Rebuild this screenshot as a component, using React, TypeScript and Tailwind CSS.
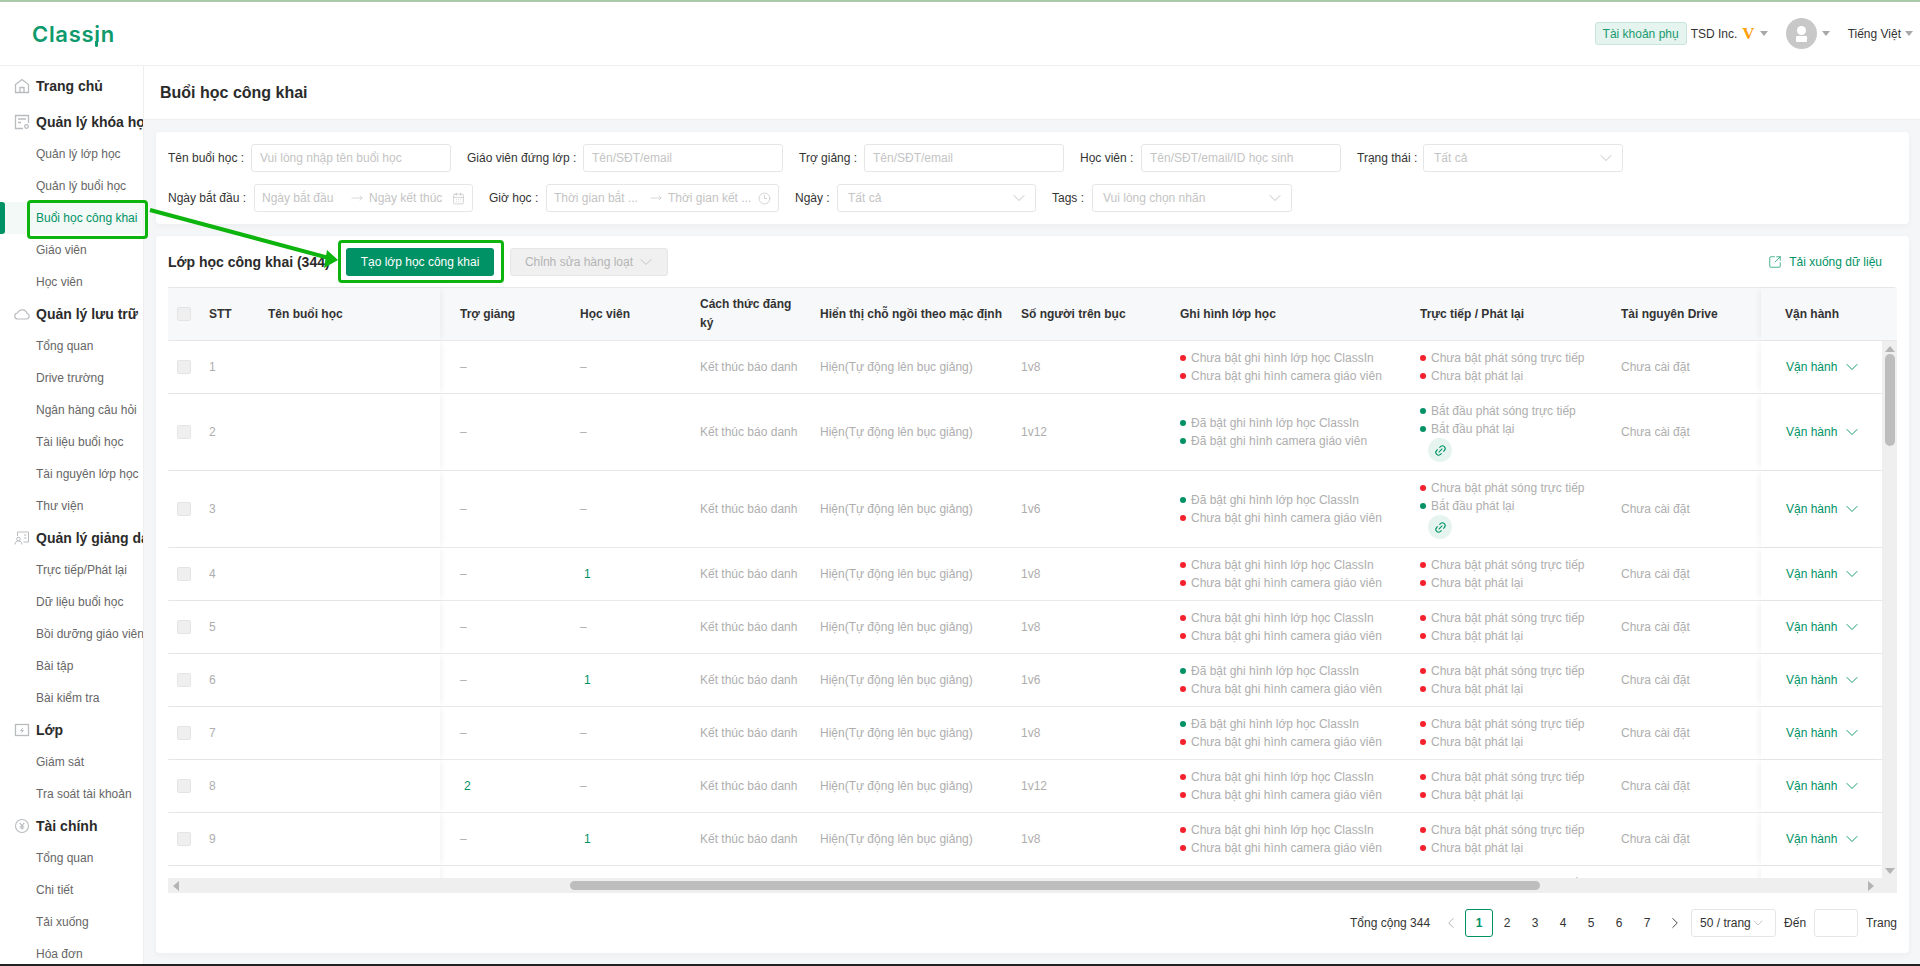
import React from 'react';
import { ChevronDown, ChevronLeft, ChevronRight, Link2, CalendarDays, Clock3, MoveRight, SquareArrowOutUpRight } from 'lucide-react';

const GREEN = 'text-[#009265]';

const IconHome = () => (
  <svg width="16" height="16" viewBox="0 0 16 16" fill="none" stroke="#b9bcbf" strokeWidth="1.3">
    <path d="M1.5 6.5 8 1.5l6.5 5V14.5h-13z" />
    <path d="M6 14.5V9.5h4v5" />
  </svg>
);
const IconCourse = () => (
  <svg width="16" height="16" viewBox="0 0 16 16" fill="none" stroke="#b9bcbf" strokeWidth="1.3">
    <path d="M9 14.5H1.5v-13h13V9" />
    <path d="M4 5h8M4 8.5h3" />
    <circle cx="12.5" cy="12.5" r="1.8" />
  </svg>
);
const IconCloud = () => (
  <svg width="16" height="16" viewBox="0 0 16 16" fill="none" stroke="#b9bcbf" strokeWidth="1.2">
    <path d="M4 13h8.5a2.8 2.8 0 0 0 .6-5.5A5 5 0 0 0 3.6 7 3 3 0 0 0 4 13z" />
  </svg>
);
const IconTeach = () => (
  <svg width="16" height="16" viewBox="0 0 16 16" fill="none" stroke="#b9bcbf" strokeWidth="1">
    <path d="M3.5 6V2h11v10h-5" />
    <circle cx="4.5" cy="9" r="1.8" />
    <path d="M1 14.5c0-2.5 1.5-3.5 3.5-3.5s3.5 1 3.5 3.5M10 5h2.5M10 8h2.5" />
  </svg>
);
const IconClass = () => (
  <svg width="16" height="16" viewBox="0 0 16 16" fill="none" stroke="#b9bcbf" strokeWidth="1.3">
    <rect x="1.5" y="2.5" width="13" height="11" />
    <path d="M9 6 6.5 8.5h3L7 10.5" strokeWidth="1" />
  </svg>
);
const IconMoney = () => (
  <svg width="16" height="16" viewBox="0 0 16 16" fill="none" stroke="#b9bcbf" strokeWidth="1.1">
    <circle cx="8" cy="8" r="6.5" />
    <path d="M5.7 4.8 8 7.5l2.3-2.7M8 7.5v4M5.8 8.2h4.4M5.8 10h4.4" />
  </svg>
);

const menu = [
  { title: 'Trang chủ', icon: <IconHome />, items: [] as string[] },
  { title: 'Quản lý khóa học', icon: <IconCourse />, items: ['Quản lý lớp học', 'Quản lý buổi học', 'Buổi học công khai', 'Giáo viên', 'Học viên'] },
  { title: 'Quản lý lưu trữ', icon: <IconCloud />, items: ['Tổng quan', 'Drive trường', 'Ngân hàng câu hỏi', 'Tài liệu buổi học', 'Tài nguyên lớp học', 'Thư viện'] },
  { title: 'Quản lý giảng dạy', icon: <IconTeach />, items: ['Trực tiếp/Phát lại', 'Dữ liệu buổi học', 'Bồi dưỡng giáo viên', 'Bài tập', 'Bài kiểm tra'] },
  { title: 'Lớp', icon: <IconClass />, items: ['Giám sát', 'Tra soát tài khoản'] },
  { title: 'Tài chính', icon: <IconMoney />, items: ['Tổng quan', 'Chi tiết', 'Tải xuống', 'Hóa đơn'] },
];

const Caret = () => <span className="inline-block w-0 h-0 border-x-[4px] border-x-transparent border-t-[5px] border-t-[#a8a8a8]" />;

const Sidebar = () => (
  <aside className="w-[144px] shrink-0 border-r border-[#eeeeee] bg-white pt-1 overflow-hidden">
    {menu.map((m, i) => (
      <div key={i}>
        <div className={`h-8 flex items-center pl-[14px] gap-[6px] whitespace-nowrap ${i === 0 ? 'mb-1' : ''}`}>
          <span className="w-4 h-4 shrink-0">{m.icon}</span>
          <span className="text-[14px] font-bold text-[#2b2b2b]">{m.title}</span>
        </div>
        {m.items.map(t => {
          const active = t === 'Buổi học công khai';
          return (
            <div key={t} className={`h-8 flex items-center pl-9 text-[12px] whitespace-nowrap relative ${active ? 'bg-[#f2f9f6] text-[#009265]' : 'text-[#666666]'}`}>
              {active && <span className="absolute left-0 top-0 bottom-0 w-[5px] bg-[#009265] rounded-r-[3px]" />}
              {t}
            </div>
          );
        })}
      </div>
    ))}
  </aside>
);

const Header = () => (
  <header className="h-[64px] border-b border-[#eeeeee] bg-white flex items-center shrink-0 pr-[7px]">
    <div className="ml-8 text-[22px] leading-none font-semibold text-[#0e9a6c] font-['Inter',sans-serif] tracking-[0.7px]">
      Class
      <span className="relative inline-block">
        i
        <span className="absolute left-[1px] top-[18px] w-[3px] h-[6px] bg-[#0e9a6c] rounded-b-[2px]" />
      </span>
      n
    </div>
    <div className="ml-auto flex items-center text-[12px] text-[#333333]">
      <span className="h-[23px] px-[7px] flex items-center bg-[#e5f4ee] border border-[#c8e6da] rounded-[3px] text-[#1a9a70]">Tài khoản phụ</span>
      <span className="ml-1">TSD Inc.</span>
      <span className="ml-[5px] text-[17px] leading-none font-bold text-[#ff9d0a] font-['Liberation_Serif',serif]">V</span>
      <span className="ml-[5px] flex"><Caret /></span>
      <span className="ml-[18px] w-[31px] h-[31px] rounded-full bg-[#c8c8c8] flex flex-col items-center justify-center">
        <span className="w-[9px] h-[9px] rounded-full bg-white" />
        <span className="w-[11px] h-[6px] bg-white rounded-[1px] mt-[1px]" />
      </span>
      <span className="ml-[5px] flex"><Caret /></span>
      <span className="ml-[18px]">Tiếng Việt</span>
      <span className="ml-[4px] flex"><Caret /></span>
    </div>
  </header>
);

const Input = ({ w, text }: { w: string; text: string }) => (
  <div className={`${w} h-7 border border-[#e6e6e6] rounded-[3px] px-2 flex items-center text-[12px] text-[#c4c4c4] whitespace-nowrap`}>{text}</div>
);
const Select = ({ w, text }: { w: string; text: string }) => (
  <div className={`${w} h-7 border border-[#e6e6e6] rounded-[3px] pl-[10px] pr-[6px] flex items-center justify-between text-[12px] text-[#c4c4c4] whitespace-nowrap`}>
    {text}
    <ChevronDown size={20} strokeWidth={0.9} className="text-[#b0b0b0]" />
  </div>
);
const Range = ({ w, from, to, icon }: { w: string; from: string; to: string; icon: React.ReactNode }) => (
  <div className={`${w} h-7 border border-[#e6e6e6] rounded-[3px] px-[7px] flex items-center text-[12px] text-[#c4c4c4] whitespace-nowrap`}>
    <span className="flex-1">{from}</span>
    <MoveRight size={12} strokeWidth={1} className="mx-[6px] text-[#b0b0b0]" />
    <span className="flex-1">{to}</span>
    {icon}
  </div>
);
const Label = ({ w, text }: { w: string; text: string }) => (
  <span className={`${w} shrink-0 text-[12px] text-[#333333] whitespace-nowrap`}>{text} :</span>
);

const Filters = () => (
  <div className="bg-white rounded-[4px] shadow-[0_2px_6px_rgba(0,0,0,0.04)] p-3 flex flex-col gap-3">
    <div className="flex items-center gap-4">
      <div className="flex items-center"><Label w="w-[83px]" text="Tên buổi học" /><Input w="w-[200px]" text="Vui lòng nhập tên buổi học" /></div>
      <div className="flex items-center"><Label w="w-[116px]" text="Giáo viên đứng lớp" /><Input w="w-[200px]" text="Tên/SĐT/email" /></div>
      <div className="flex items-center"><Label w="w-[65px]" text="Trợ giảng" /><Input w="w-[200px]" text="Tên/SĐT/email" /></div>
      <div className="flex items-center"><Label w="w-[61px]" text="Học viên" /><Input w="w-[200px]" text="Tên/SĐT/email/ID học sinh" /></div>
      <div className="flex items-center"><Label w="w-[66px]" text="Trạng thái" /><Select w="w-[200px]" text="Tất cả" /></div>
    </div>
    <div className="flex items-center gap-4">
      <div className="flex items-center"><Label w="w-[86px]" text="Ngày bắt đầu" /><Range w="w-[219px]" from="Ngày bắt đầu" to="Ngày kết thúc" icon={<CalendarDays size={13} strokeWidth={1} className="text-[#b0b0b0] shrink-0" />} /></div>
      <div className="flex items-center"><Label w="w-[57px]" text="Giờ học" /><Range w="w-[233px]" from="Thời gian bắt ..." to="Thời gian kết ..." icon={<Clock3 size={13} strokeWidth={1} className="text-[#b0b0b0] shrink-0" />} /></div>
      <div className="flex items-center"><Label w="w-[42px]" text="Ngày" /><Select w="w-[199px]" text="Tất cả" /></div>
      <div className="flex items-center"><Label w="w-[40px]" text="Tags" /><Select w="w-[200px]" text="Vui lòng chọn nhãn" /></div>
    </div>
  </div>
);

type Row = { n?: number; ta?: string; hv?: string; seats: string; rec: [boolean, boolean]; live: boolean; replay: boolean };

const rows: Row[] = [
  { n: 1, seats: '1v8', rec: [false, false], live: false, replay: false },
  { n: 2, seats: '1v12', rec: [true, true], live: true, replay: true },
  { n: 3, seats: '1v6', rec: [true, false], live: false, replay: true },
  { n: 4, hv: '1', seats: '1v8', rec: [false, false], live: false, replay: false },
  { n: 5, seats: '1v8', rec: [false, false], live: false, replay: false },
  { n: 6, hv: '1', seats: '1v6', rec: [true, false], live: false, replay: false },
  { n: 7, seats: '1v8', rec: [true, false], live: false, replay: false },
  { n: 8, ta: '2', seats: '1v12', rec: [false, false], live: false, replay: false },
  { n: 9, hv: '1', seats: '1v8', rec: [false, false], live: false, replay: false },
  { n: 10, seats: '1v8', rec: [false, false], live: false, replay: false },
];

const Status = ({ on, text }: { on: boolean; text: string }) => (
  <div className="h-[18px] flex items-center gap-[5px] whitespace-nowrap">
    <span className={`w-[6px] h-[6px] rounded-full ${on ? 'bg-[#009265]' : 'bg-[#f5222d]'}`} />
    {text}
  </div>
);

const CountCell = ({ value }: { value?: string }) =>
  value ? <span className={`${GREEN} pl-1`}>{value}</span> : <span>–</span>;

const LEFT = 'w-[272px] shrink-0 flex bg-white relative z-10 shadow-[4px_0_6px_-2px_rgba(0,0,0,0.05)]';
const RIGHT = 'w-[121px] shrink-0 relative z-10 shadow-[-4px_0_6px_-2px_rgba(0,0,0,0.05)]';

const TableHead = () => (
  <div className="h-[54px] w-full flex border-y border-[#e8e8e8] bg-[#f7f8fa] rounded-tr-[4px] text-[12px] font-bold text-[#333333] shrink-0">
    <div className={`${LEFT} !bg-[#f7f8fa] items-center`}>
      <span className="ml-[9px] w-[14px] h-[14px] bg-[#efefef] border border-[#e4e4e4] rounded-[2px]" />
      <span className="ml-[18px] w-[59px]">STT</span>
      <span>Tên buổi học</span>
    </div>
    <div className="flex-1 flex items-center">
      <div className="w-[120px] pl-5">Trợ giảng</div>
      <div className="w-[120px] pl-5">Học viên</div>
      <div className="w-[120px] pl-5 pr-2 leading-[19px]">Cách thức đăng ký</div>
      <div className="w-[201px] pl-5 whitespace-nowrap">Hiển thị chỗ ngồi theo mặc định</div>
      <div className="w-[159px] pl-5 whitespace-nowrap">Số người trên bục</div>
      <div className="w-[240px] pl-5">Ghi hình lớp học</div>
      <div className="w-[201px] pl-5">Trực tiếp / Phát lại</div>
      <div className="pl-5">Tài nguyên Drive</div>
    </div>
    <div className="w-[136px] shrink-0 flex items-center justify-center pr-[34px] bg-[#f7f8fa] relative z-10 shadow-[-4px_0_6px_-2px_rgba(0,0,0,0.05)]">Vận hành</div>
  </div>
);

const TableRow = ({ r }: { r: Row }) => (
  <div className="flex items-stretch border-b border-[#e8e8e8] text-[12px] text-[#aeaeae]">
    <div className={`${LEFT} items-center`}>
      <span className="ml-[9px] w-[14px] h-[14px] bg-[#efefef] border border-[#e4e4e4] rounded-[2px]" />
      <span className="ml-[18px]">{r.n}</span>
    </div>
    <div className="flex-1 flex items-center">
      <div className="w-[120px] pl-5"><CountCell value={r.ta} /></div>
      <div className="w-[120px] pl-5"><CountCell value={r.hv} /></div>
      <div className="w-[120px] pl-5 whitespace-nowrap">Kết thúc báo danh</div>
      <div className="w-[201px] pl-5 whitespace-nowrap">Hiện(Tự động lên bục giảng)</div>
      <div className="w-[159px] pl-5">{r.seats}</div>
      <div className="w-[240px] pl-5 py-2">
        <Status on={r.rec[0]} text={r.rec[0] ? 'Đã bật ghi hình lớp học ClassIn' : 'Chưa bật ghi hình lớp học ClassIn'} />
        <Status on={r.rec[1]} text={r.rec[1] ? 'Đã bật ghi hình camera giáo viên' : 'Chưa bật ghi hình camera giáo viên'} />
      </div>
      <div className="w-[201px] pl-5 py-2">
        <Status on={r.live} text={r.live ? 'Bắt đầu phát sóng trực tiếp' : 'Chưa bật phát sóng trực tiếp'} />
        <Status on={r.replay} text={r.replay ? 'Bắt đầu phát lại' : 'Chưa bật phát lại'} />
        {r.replay && (
          <span className="ml-2 w-6 h-6 rounded-full bg-[#e6f4ef] flex items-center justify-center">
            <Link2 size={13} className={`${GREEN} -rotate-45`} />
          </span>
        )}
      </div>
      <div className="pl-5 whitespace-nowrap">Chưa cài đặt</div>
    </div>
    <div className={`${RIGHT} bg-white flex items-center pl-[25px] gap-[5px] ${GREEN}`}>
      Vận hành
      <ChevronDown size={20} strokeWidth={1.1} />
    </div>
  </div>
);

const Pagination = () => (
  <div className="mt-4 flex items-center justify-end text-[12px] text-[#333333]">
    <span className="mr-[7px]">Tổng cộng 344</span>
    <span className="w-7 h-7 flex items-center justify-center text-[#aaaaaa]"><ChevronLeft size={18} strokeWidth={1.2} /></span>
    <span className={`w-7 h-7 flex items-center justify-center border border-[#009265] rounded-[3px] font-bold ${GREEN}`}>1</span>
    {[2, 3, 4, 5, 6, 7].map(p => (
      <span key={p} className="w-7 h-7 flex items-center justify-center">{p}</span>
    ))}
    <span className="w-7 h-7 flex items-center justify-center"><ChevronRight size={18} strokeWidth={1.2} /></span>
    <span className="ml-[2px] w-[85px] h-7 border border-[#e6e6e6] rounded-[3px] pl-2 pr-[9px] flex items-center justify-between whitespace-nowrap">
      50 / trang
      <ChevronDown size={16} strokeWidth={1} className="text-[#b0b0b0] shrink-0 -ml-[3px]" />
    </span>
    <span className="ml-2">Đến</span>
    <span className="ml-2 w-[44px] h-7 border border-[#e6e6e6] rounded-[3px]" />
    <span className="ml-2">Trang</span>
  </div>
);

const TableCard = () => (
  <div className="mt-3 h-[717px] bg-white rounded-[4px] shadow-[0_2px_6px_rgba(0,0,0,0.04)] px-3 pt-3 flex flex-col">
    <div className="h-7 flex items-center shrink-0">
      <span className="w-[178px] text-[14px] font-bold text-[#2b2b2b] whitespace-nowrap">Lớp học công khai (344)</span>
      <button className="w-[148px] h-7 bg-[#009265] rounded-[3px] text-[12px] text-white">Tạo lớp học công khai</button>
      <button className="ml-4 w-[158px] h-7 bg-[#f0f0f0] border border-[#e6e6e6] rounded-[3px] text-[12px] text-[#b4b4b4] flex items-center justify-center gap-[3px] pl-[3px]">
        Chỉnh sửa hàng loạt
        <ChevronDown size={20} strokeWidth={0.9} />
      </button>
      <span className={`ml-auto mr-[15px] flex items-center gap-[7px] text-[12px] ${GREEN}`}>
        <SquareArrowOutUpRight size={14} strokeWidth={1.2} />
        Tải xuống dữ liệu
      </span>
    </div>
    <div className="mt-[11px] shrink-0 flex flex-col">
      <TableHead />
      <div className="h-[537px] flex">
        <div className="flex-1 overflow-hidden">
          {rows.map(r => <TableRow key={r.n} r={r} />)}
        </div>
        <div className="w-[15px] shrink-0 bg-[#efefef] flex flex-col items-center pt-[5px] pb-[4px]">
          <span className="w-0 h-0 border-x-[5px] border-x-transparent border-b-[6px] border-b-[#b4b4b4]" />
          <span className="mt-[2px] w-[10px] h-[92px] rounded-[5px] bg-[#bdbdbd]" />
          <span className="mt-auto w-0 h-0 border-x-[5px] border-x-transparent border-t-[6px] border-t-[#b4b4b4]" />
        </div>
      </div>
      <div className="h-[15px] bg-[#efefef] flex items-center px-[5px]">
        <span className="w-0 h-0 border-y-[5px] border-y-transparent border-r-[6px] border-r-[#b4b4b4]" />
        <span className="ml-[391px] w-[970px] h-[9px] rounded-[5px] bg-[#bdbdbd]" />
        <span className="ml-auto mr-[18px] w-0 h-0 border-y-[5px] border-y-transparent border-l-[6px] border-l-[#b4b4b4]" />
      </div>
    </div>
    <Pagination />
  </div>
);

// chú thích màu xanh đè lên giao diện
const Annotations = () => (
  <>
    <div className="absolute left-[27px] top-[198px] w-[121px] h-[39px] border-[3px] border-[#0db40d] rounded-[4px] pointer-events-none z-20" />
    <div className="absolute left-[338px] top-[238px] w-[166px] h-[43px] border-[3px] border-[#0db40d] rounded-[4px] pointer-events-none z-20" />
    <svg className="absolute left-0 top-[-2px] pointer-events-none z-20" width="1920" height="966">
      <path d="M150 210 329 258" stroke="#0db40d" strokeWidth="4" />
      <path d="M338 260 327 250 324 268z" fill="#0db40d" />
    </svg>
  </>
);

export default function App() {
  return (
    <div className="relative h-screen w-full overflow-hidden flex flex-col bg-white font-['Liberation_Sans',Arial,sans-serif] border-t-2 border-[#a9c9a9] border-b-2 border-b-[#222222]">
      <Header />
      <div className="flex-1 min-h-0 flex">
        <Sidebar />
        <main className="flex-1 min-w-0 bg-[#f5f6f8]">
          <div className="h-[54px] bg-white border-b border-[#eeeeee] pl-4 flex items-center text-[16px] font-bold text-[#2b2b2b]">Buổi học công khai</div>
          <div className="pt-3 pl-3 pr-[11px]">
            <Filters />
            <TableCard />
          </div>
        </main>
      </div>
      <Annotations />
    </div>
  );
}
